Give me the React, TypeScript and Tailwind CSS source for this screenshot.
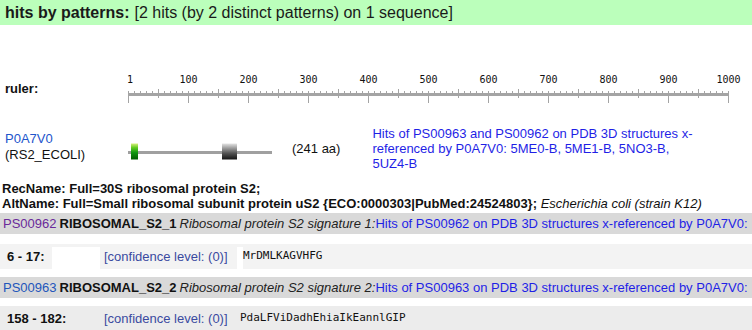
import React from "react";

const font = { fontFamily: '"Liberation Sans", Arial, sans-serif' };

function Ruler() {
  const x = (n: number) => 8.5 + n * 0.6;
  const ticks = [];
  for (let n = 0; n <= 1000; n += 10) {
    const major = n % 100 === 0;
    const mid = !major && n % 50 === 0;
    ticks.push(
      <line
        key={n}
        x1={x(n)}
        x2={x(n)}
        y1={major ? 21 : mid ? 19 : 21}
        y2={major ? 33 : mid ? 28 : 26}
        stroke="#a4a4a4"
        strokeWidth={1}
      />
    );
  }
  const labels = [1, 100, 200, 300, 400, 500, 600, 700, 800, 900, 1000];
  return (
    <svg width="630" height="40" className="block">
      {labels.map((l) => (
        <text
          key={l}
          x={x(l === 1 ? 0 : l) + (l === 1 ? 1.5 : 0)}
          y={13}
          textAnchor="middle"
          fontSize="10"
          fontFamily='"DejaVu Sans Mono", monospace'
          fill="#111"
        >
          {l}
        </text>
      ))}
      <rect x={x(0)} y={23} width={600} height={3} fill="#a4a4a4" />
      {ticks}
    </svg>
  );
}

function SeqGraphic() {
  return (
    <svg width="165" height="22" className="block">
      <defs>
        <linearGradient id="gGreen" x1="0" y1="0" x2="0" y2="1">
          <stop offset="0" stopColor="#d8f080" />
          <stop offset="0.25" stopColor="#66cc22" />
          <stop offset="0.55" stopColor="#119911" />
          <stop offset="1" stopColor="#005a00" />
        </linearGradient>
        <linearGradient id="gDark" x1="0" y1="0" x2="0" y2="1">
          <stop offset="0" stopColor="#e4e4e4" />
          <stop offset="0.3" stopColor="#9a9a9a" />
          <stop offset="0.6" stopColor="#555" />
          <stop offset="1" stopColor="#151515" />
        </linearGradient>
      </defs>
      <rect x={8} y={10} width={144} height={3} fill="#a0a0a0" />
      <rect x={11} y={2.5} width={7} height={16} fill="url(#gGreen)" />
      <rect x={102} y={2.5} width={15} height={16} fill="url(#gDark)" />
    </svg>
  );
}

function PatternRow({ ac, acColor, name, desc, ps }: { ac: string; acColor: string; name: string; desc: string; ps: string }) {
  return (
    <div className="h-[21px] bg-[#d9d9d9] flex items-center pl-[3px] whitespace-nowrap overflow-hidden text-[13px]">
      <span style={{ color: acColor }}>{ac}</span>
      <span className="font-bold text-[#111] ml-[3px]">{name}</span>
      <span className="italic text-[#222] ml-[3px]">{desc}</span>
      <span className="text-[#1f1fe6]">Hits of {ps} on PDB 3D structures x-referenced by P0A7V0:</span>
    </div>
  );
}

export default function App() {
  return (
    <div className="w-[752px] h-[330px] bg-white overflow-hidden text-[#111]" style={font}>
      {/* header */}
      <div className="h-[25px] bg-[#bbffbb] pl-[5px] flex items-center text-[16px] text-[#1a1a1a]">
        <span className="font-bold">hits by patterns:</span>
        <span className="ml-[5px]">[2 hits (by 2 distinct patterns) on 1 sequence]</span>
      </div>

      {/* ruler */}
      <div className="flex items-start mt-[45px]">
        <div className="w-[120px] pl-[5px] pt-[11px] text-[13px] font-bold leading-[16px]">ruler:</div>
        <Ruler />
      </div>

      {/* sequence */}
      <div className="flex items-start mt-[16px] h-[55px]">
        <div className="w-[120px] pl-[5px] pt-[5px] text-[13px] leading-[16px]">
          <div className="text-[#2255cc]">P0A7V0</div>
          <div>(RS2_ECOLI)</div>
        </div>
        <div className="mt-[15px]">
          <SeqGraphic />
        </div>
        <div className="ml-[7px] mt-[15px] text-[13px] leading-[16px]">(241 aa)</div>
        <div className="ml-[32px] w-[335px] text-[13px] leading-[15px] text-[#1f1fe6]">
          Hits of PS00963 and PS00962 on PDB 3D structures x-referenced by P0A7V0: 5ME0-B, 5ME1-B, 5NO3-B, 5UZ4-B
        </div>
      </div>

      {/* names */}
      <div className="pl-[2px] text-[13px] leading-[15px] whitespace-nowrap">
        <div className="font-bold">RecName: Full=30S ribosomal protein S2;</div>
        <div>
          <span className="font-bold">AltName: Full=Small ribosomal subunit protein uS2 {"{ECO:0000303|PubMed:24524803}"};</span>{" "}
          <span className="italic">Escherichia coli (strain K12)</span>
        </div>
      </div>

      <div className="mt-[2px]">
        <PatternRow ac="PS00962" acColor="#6a2a9a" name="RIBOSOMAL_S2_1" desc="Ribosomal protein S2 signature 1:" ps="PS00962" />
      </div>

      <div className="mt-[10px] h-[25px] bg-[#f3f3f3] flex items-stretch text-[13px]">
        <div className="w-[52px] pl-[7px] font-bold flex items-center">6 - 17:</div>
        <div className="w-[48px] mt-[3px] bg-white" />
        <div className="w-[137px] pl-[4px] flex items-center text-[#3a4aa0]">[confidence level: (0)]</div>
        <div className="w-[6px] mt-[3px] bg-white" />
        <div className="flex items-center text-[11px]" style={{ fontFamily: '"DejaVu Sans Mono", monospace' }}>
          MrDMLKAGVHFG
        </div>
      </div>

      <div className="mt-[8px]">
        <PatternRow ac="PS00963" acColor="#2255bb" name="RIBOSOMAL_S2_2" desc="Ribosomal protein S2 signature 2:" ps="PS00963" />
      </div>

      <div className="mt-[8px] h-[25px] bg-[#ececec] flex items-stretch text-[13px]">
        <div className="w-[100px] pl-[7px] font-bold flex items-center">158 - 182:</div>
        <div className="w-[140px] pl-[4px] flex items-center text-[#3a4aa0]">[confidence level: (0)]</div>
        <div className="flex items-center text-[11px]" style={{ fontFamily: '"DejaVu Sans Mono", monospace' }}>
          PdaLFViDadhEhiaIkEannlGIP
        </div>
      </div>
    </div>
  );
}
